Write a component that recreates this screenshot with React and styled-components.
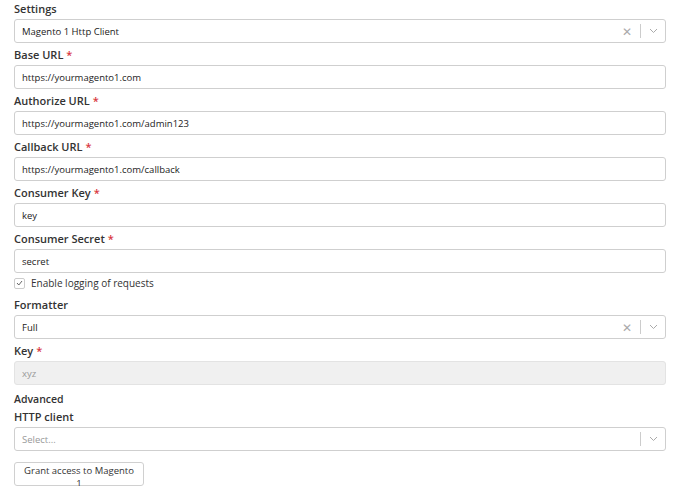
import React from "react";
import styled, { createGlobalStyle } from "styled-components";

const G = createGlobalStyle`
  body { margin: 0; font-family: "Open Sans", "Noto Sans", sans-serif; color: #333; background: #fff; }
`;
const Page = styled.div`
  padding: 0 24px 0 14px;
  display: flex; flex-direction: column;
`;
const Label = styled.div`
  font-size: 11px; font-weight: 600; line-height: 18px; height: 18px; margin-bottom: 1px; color: #333;
`;
const Star = styled.span` color: #d9363e; margin-left: 3px; `;
const Box = styled.div`
  height: 24px; box-sizing: border-box; border: 1px solid ${p => p.disabled ? "#e3e3e3" : "#cfcfcf"};
  border-radius: 3px; background: ${p => p.disabled ? "#f0f0f0" : "#fff"};
  display: flex; align-items: center; padding-left: 7px; font-size: 9.5px;
  color: ${p => p.muted ? "#999" : "#222"}; margin-bottom: 3px; flex-shrink: 0;
`;
const Value = styled.div` flex: 1; `;
const Icons = styled.div` display: flex; align-items: center; height: 100%; color: #aaa; `;
const Clear = styled.span` font-size: 12px; padding: 0 8px; color: #aaa; `;
const Sep = styled.div` width: 1px; height: 14px; background: #ccc; `;
const Chev = styled.div` width: 24px; display: flex; justify-content: center; `;
const Check = styled.label`
  display: flex; align-items: center; gap: 6px; font-size: 10px; height: 14px; margin: 0 0 6px 0;
`;
const CB = styled.span`
  width: 9px; height: 9px; border: 1px solid #ccc; border-radius: 2px; display: flex; align-items: center; justify-content: center;
`;
const Section = styled.div` font-size: 10.5px; font-weight: 600; line-height: 18px; margin-top: 2px; `;
const Button = styled.button`
  align-self: flex-start; margin-top: 8px; height: 24px; width: 130px; border: 1px solid #d0d0d0; border-radius: 3px;
  background: #fff; font-family: inherit; font-size: 9.5px; color: #333; flex-shrink: 0;
`;

const Chevron = () => (
  <svg width="9" height="6" viewBox="0 0 9 6"><path d="M1 1l3.5 3.5L8 1" fill="none" stroke="#aaa" strokeWidth="1"/></svg>
);

const Select = ({ value, clear, muted }) => (
  <Box muted={muted}>
    <Value>{value}</Value>
    <Icons>
      {clear && <Clear>✕</Clear>}
      <Sep />
      <Chev><Chevron /></Chev>
    </Icons>
  </Box>
);

const Field = ({ label, req, children }) => (
  <>
    <Label>{label}{req && <Star>*</Star>}</Label>
    {children}
  </>
);

export default function App() {
  return (
    <Page>
      <G />
      <Field label="Settings"><Select value="Magento 1 Http Client" clear /></Field>
      <Field label="Base URL" req><Box>https://yourmagento1.com</Box></Field>
      <Field label="Authorize URL" req><Box>https://yourmagento1.com/admin123</Box></Field>
      <Field label="Callback URL" req><Box>https://yourmagento1.com/callback</Box></Field>
      <Field label="Consumer Key" req><Box>key</Box></Field>
      <Field label="Consumer Secret" req><Box>secret</Box></Field>
      <Check>
        <CB><svg width="7" height="6" viewBox="0 0 7 6"><path d="M1 3l1.8 2L6 1" fill="none" stroke="#555" strokeWidth="0.9"/></svg></CB>
        Enable logging of requests
      </Check>
      <Field label="Formatter"><Select value="Full" clear /></Field>
      <Field label="Key" req><Box disabled muted>xyz</Box></Field>
      <Section>Advanced</Section>
      <Field label="HTTP client"><Select value="Select..." muted /></Field>
      <Button>Grant access to Magento 1</Button>
    </Page>
  );
}
